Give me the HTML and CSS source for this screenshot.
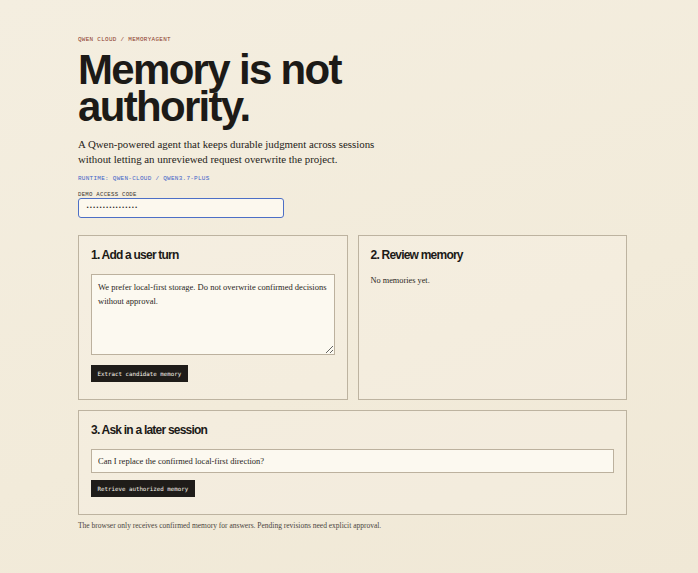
FILE: index.html
```html
<!DOCTYPE html>
<html lang="en">
<head>
<meta charset="utf-8">
<title>MemoryAgent</title>
<link rel="stylesheet" href="styles.css">
</head>
<body>
<main class="page">
  <p class="eyebrow">QWEN CLOUD / MEMORYAGENT</p>
  <h1 class="title">Memory is not<br>authority.</h1>
  <p class="lede">A Qwen-powered agent that keeps durable judgment across sessions without letting an unreviewed request overwrite the project.</p>
  <p class="runtime">RUNTIME: QWEN-CLOUD / QWEN3.7-PLUS</p>
  <label class="field-label" for="code">DEMO ACCESS CODE</label>
  <input class="access-input" id="code" type="password" value="demoaccesscode16">

  <section class="grid">
    <div class="card">
      <h2 class="card-title">1. Add a user turn</h2>
      <textarea class="turn-input">We prefer local-first storage. Do not overwrite confirmed decisions without approval.</textarea>
      <button class="btn btn-extract" type="button">Extract candidate memory</button>
    </div>
    <div class="card">
      <h2 class="card-title">2. Review memory</h2>
      <p class="empty">No memories yet.</p>
    </div>
    <div class="card card-wide">
      <h2 class="card-title">3. Ask in a later session</h2>
      <input class="ask-input" type="text" value="Can I replace the confirmed local-first direction?">
      <button class="btn btn-retrieve" type="button">Retrieve authorized memory</button>
    </div>
  </section>

  <p class="footnote">The browser only receives confirmed memory for answers. Pending revisions need explicit approval.</p>
</main>
</body>
</html>
```
FILE: styles.css
```css
html, body {
  margin: 0;
  padding: 0;
}

body {
  background: #f3ecdc;
  background-image: linear-gradient(160deg, #f4eee0 0%, #f2ebda 60%, #f0e8d6 100%);
  min-height: 573px;
  color: #1d1a17;
  font-family: "Liberation Serif", "Times New Roman", serif;
}

.page {
  padding: 36px 71px 30px 78px;
}

.eyebrow {
  margin: 0;
  font: 6px/8px "Liberation Mono", monospace;
  letter-spacing: 0.045em;
  color: #8c3b2c;
}

.title {
  margin: 7px 0 0;
  font: 700 42px/37px "Liberation Sans", Arial, sans-serif;
  letter-spacing: -0.04em;
  color: #1c1a17;
}

.lede {
  margin: 12px 0 0;
  max-width: 305px;
  font-size: 10.85px;
  line-height: 15px;
  color: #1f1c19;
}

.runtime {
  margin: 8px 0 0;
  font: 6px/8px "Liberation Mono", monospace;
  letter-spacing: 0.045em;
  color: #3f63c8;
}

.field-label {
  display: block;
  margin-top: 8px;
  font: 5.7px/7px "Liberation Mono", monospace;
  letter-spacing: 0.045em;
  color: #3a352f;
}

.access-input {
  display: block;
  box-sizing: border-box;
  width: 206px;
  height: 20px;
  margin: 0;
  padding: 0 7px;
  border: 1.5px solid #4d6fc6;
  border-radius: 3px;
  background: #fcf8ee;
  font: 5.4px "Liberation Mono", monospace;
  color: #2a2622;
  outline: none;
}

.grid {
  display: grid;
  grid-template-columns: 1fr 1fr;
  gap: 10px;
  margin-top: 17px;
}

.card {
  border: 1px solid #bdb3a0;
  padding: 12px 12px 17px;
  background: rgba(255, 252, 244, 0.18);
}

.card-wide {
  grid-column: 1 / -1;
}

.card-title {
  margin: 0;
  font: 700 12px/15px "Liberation Sans", Arial, sans-serif;
  letter-spacing: -0.065em;
  color: #1c1a17;
}

.turn-input {
  display: block;
  box-sizing: border-box;
  width: 100%;
  height: 81px;
  margin: 11px 0 0;
  padding: 5px 6px;
  border: 1px solid #bcb19e;
  background: #fcf9f0;
  font: 8.5px/14px "Liberation Serif", "Times New Roman", serif;
  color: #2a2622;
  outline: none;
}

.ask-input {
  display: block;
  box-sizing: border-box;
  width: 100%;
  height: 24px;
  margin: 11px 0 0;
  padding: 0 6px;
  border: 1px solid #bcb19e;
  background: #fcf9f0;
  font: 8.5px "Liberation Serif", "Times New Roman", serif;
  color: #2a2622;
  outline: none;
}

.empty {
  margin: 12px 0 0;
  font-size: 8.3px;
  line-height: 12px;
  color: #2a2622;
}

.btn {
  display: block;
  height: 17px;
  padding: 0 6.5px;
  border: 0;
  background: #1f1c19;
  color: #f7f3ea;
  font: 5.8px "DejaVu Sans Mono", "Liberation Mono", monospace;
  cursor: pointer;
}

.btn-extract {
  margin-top: 10px;
}

.btn-retrieve {
  margin-top: 7px;
}

.footnote {
  margin: 6px 0 0;
  font-size: 7.5px;
  line-height: 10px;
  color: #4a4540;
}
```
